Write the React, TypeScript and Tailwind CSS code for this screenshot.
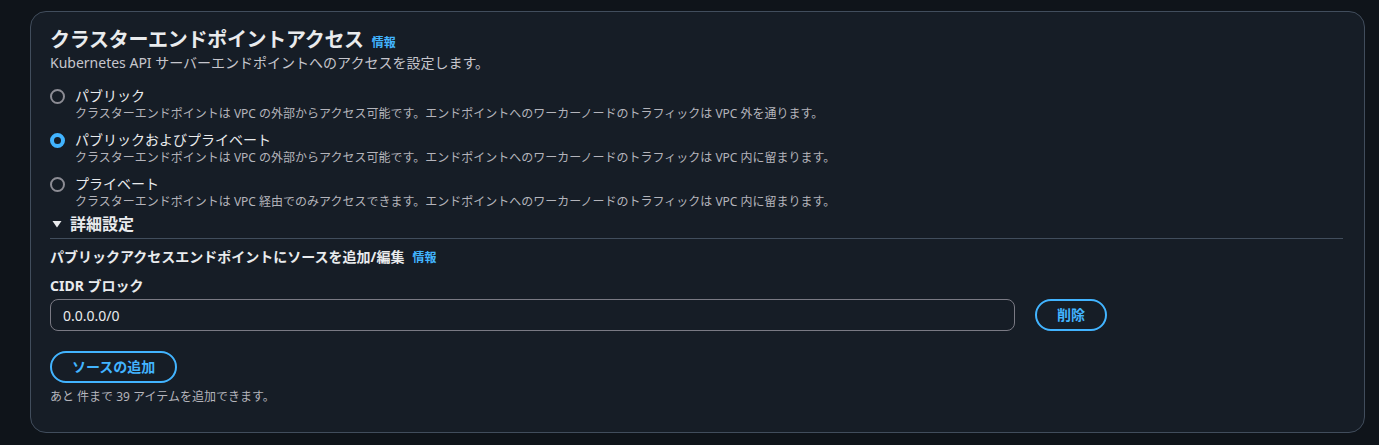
const font = { fontFamily: '"Noto Sans", "Noto Sans CJK JP", sans-serif' };

const options = [
  {
    label: "パブリック",
    desc: "クラスターエンドポイントは VPC の外部からアクセス可能です。エンドポイントへのワーカーノードのトラフィックは VPC 外を通ります。",
    checked: false,
  },
  {
    label: "パブリックおよびプライベート",
    desc: "クラスターエンドポイントは VPC の外部からアクセス可能です。エンドポイントへのワーカーノードのトラフィックは VPC 内に留まります。",
    checked: true,
  },
  {
    label: "プライベート",
    desc: "クラスターエンドポイントは VPC 経由でのみアクセスできます。エンドポイントへのワーカーノードのトラフィックは VPC 内に留まります。",
    checked: false,
  },
];

function Radio({ checked }: { checked: boolean }) {
  if (checked) {
    return <span className="mt-[3px] block h-[15px] w-[15px] shrink-0 rounded-full border-[4px] border-[#42b4ff] bg-[#161d26]" />;
  }
  return <span className="mt-[3px] block h-[15px] w-[15px] shrink-0 rounded-full border-2 border-[#8c8c94]" />;
}

function InfoLink() {
  return <a href="#" className="text-[12px] font-bold leading-4 text-[#42b4ff]">情報</a>;
}

export default function App() {
  return (
    <div className="min-h-[445px] bg-[#0f141a] pt-[11px] pb-[12px] pl-[30px] pr-[14px]" style={font}>
      <section className="rounded-[16px] border border-[#414d5c] bg-[#161d26] pl-[19px] pr-[21px] pt-[16px] pb-[27px]">
        {/* header */}
        <div className="flex items-baseline gap-[8px]">
          <h2 className="text-[20px] font-bold leading-6 tracking-[-0.015em] text-[#e9ebed]">クラスターエンドポイントアクセス</h2>
          <InfoLink />
        </div>
        <p className="mt-px text-[14px] leading-5 text-[#c6c6cd]">Kubernetes API サーバーエンドポイントへのアクセスを設定します。</p>

        {/* radio group */}
        <div className="mt-[13px] flex flex-col gap-2">
          {options.map((o) => (
            <label key={o.label} className="flex gap-[10px]">
              <Radio checked={o.checked} />
              <div>
                <div className="text-[14px] leading-5 text-[#e9ebed]">{o.label}</div>
                <div className="text-[12px] leading-4 text-[#b4b4bb]">{o.desc}</div>
              </div>
            </label>
          ))}
        </div>

        {/* expandable section */}
        <div className="mt-[4px] flex items-center gap-[8px] border-b border-[#414d5c] pb-[4px]">
          <svg width="10" height="10" viewBox="0 0 10 10" className="ml-[2px]">
            <path d="M0.5 2 L9.5 2 L5 8.5 Z" fill="#e9ebed" />
          </svg>
          <span className="text-[16px] font-bold leading-5 text-[#e9ebed]">詳細設定</span>
        </div>

        <div className="mt-[8px] flex items-baseline gap-[8px]">
          <h3 className="text-[14px] font-bold leading-5 text-[#e9ebed]">パブリックアクセスエンドポイントにソースを追加/編集</h3>
          <InfoLink />
        </div>

        <div className="mt-[9px] text-[14px] font-bold leading-5 text-[#e9ebed]">CIDR ブロック</div>
        <div className="mt-[3px] flex items-center gap-[20px]">
          <input
            readOnly
            value="0.0.0.0/0"
            className="h-[32px] w-[965px] rounded-[8px] border border-[#7a7a84] bg-[#161d26] px-[12px] text-[14px] text-[#e9ebed] outline-none"
            style={font}
          />
          <button className="h-[32px] rounded-full border-2 border-[#42b4ff] px-5 text-[14px] font-bold leading-5 text-[#42b4ff]">削除</button>
        </div>

        <button className="mt-[20px] h-[32px] rounded-full border-2 border-[#42b4ff] px-5 text-[14px] font-bold leading-5 text-[#42b4ff]">ソースの追加</button>
        <p className="mt-[6px] text-[12px] leading-4 text-[#b4b4bb]">あと 件まで 39 アイテムを追加できます。</p>
      </section>
    </div>
  );
}
